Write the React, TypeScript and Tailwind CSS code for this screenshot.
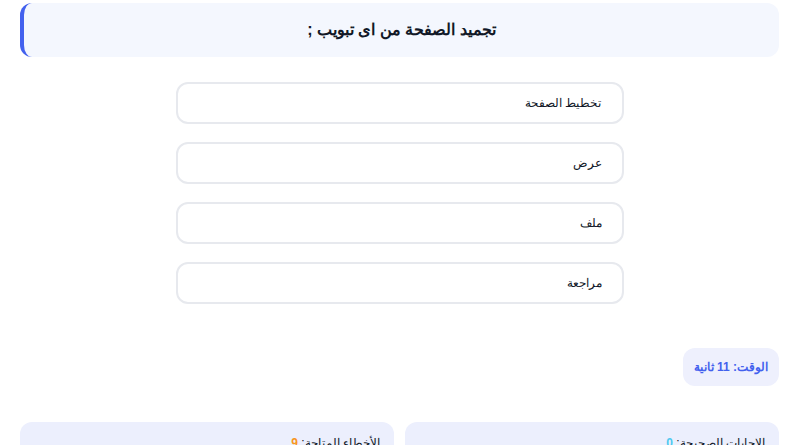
export default function App() {
  const options = ["تخطيط الصفحة", "عرض", "ملف", "مراجعة"];
  return (
    <div
      dir="rtl"
      className="min-h-screen bg-white pl-[20px] pr-[16px] pt-[3px]"
      style={{ fontFamily: '"Liberation Sans", Arial, sans-serif' }}
    >
      <div className="flex h-[54px] items-center justify-center rounded-[12px] border-l-4 border-[#4361ee] bg-[#f4f7fe]">
        <h1 className="text-[16px] font-bold text-[#111827]">تجميد الصفحة من اى تبويب ;</h1>
      </div>
      <div className="mx-auto mt-[25px] flex w-[448px] flex-col gap-[18px]">
        {options.map((o) => (
          <button
            key={o}
            className="flex h-[42px] items-center rounded-[12px] border-2 border-[#e7e9ee] bg-white pr-[20px] text-right text-[12px] text-[#111827]"
          >
            {o}
          </button>
        ))}
      </div>
      <div className="mt-[44px] flex">
        <div className="flex h-[38px] items-center rounded-[12px] bg-[#eef0fd] px-[11px] text-[12px] font-bold text-[#4361ee]">
          الوقت: 11 ثانية
        </div>
      </div>
      <div className="mt-[36px] grid grid-cols-2 gap-[11px]">
        <div className="h-[80px] rounded-[12px] bg-[#eceffd] px-[14px] pt-[12px] text-[12px] text-[#111827]">
          الإجابات الصحيحة: <span className="font-bold text-[#4cc9f0]">0</span>
        </div>
        <div className="h-[80px] rounded-[12px] bg-[#eceffd] px-[14px] pt-[12px] text-[12px] text-[#111827]">
          الأخطاء المتاحة: <span className="font-bold text-[#f8961e]">9</span>
        </div>
      </div>
    </div>
  );
}
